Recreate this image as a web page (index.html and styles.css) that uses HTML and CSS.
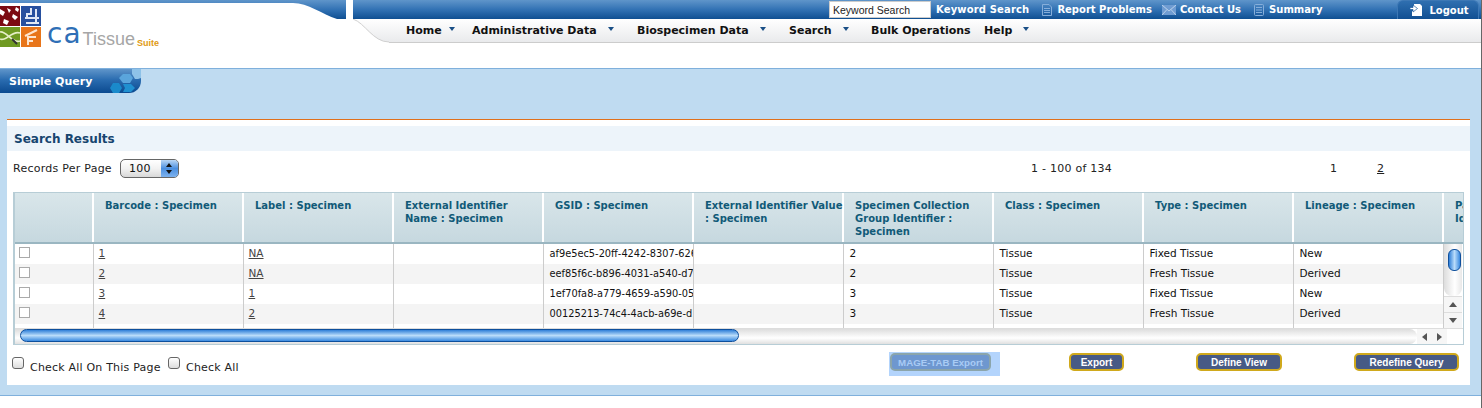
FILE: index.html
```html
<!DOCTYPE html>
<html lang="en">
<head>
  <meta charset="UTF-8">
  <title>caTissue Suite - Simple Query</title>
  <link rel="stylesheet" href="styles.css">
</head>
<body>

<div class="header">
  <div class="brand">
    <svg class="brand-curve" width="346" height="19" viewBox="0 0 346 19">
      <defs>
        <linearGradient id="barBlue" x1="0" y1="0" x2="0" y2="1">
          <stop offset="0" stop-color="#5f95ca"/>
          <stop offset="0.5" stop-color="#3272b4"/>
          <stop offset="1" stop-color="#0f4f92"/>
        </linearGradient>
      </defs>
      <path d="M0 0H346V19H337C322 14 308 3 293 3H0Z" fill="url(#barBlue)"/>
    </svg>
    <div class="logo">
      <svg class="logo-tiles" width="41" height="41" viewBox="0 0 41 41">
        <rect width="20" height="20" fill="#7c0a12"/>
        <path d="M0 3L5 6L3 10L0 8ZM7 2L11 4L9 7ZM13 8L18 11L15 14L12 11ZM4 13L9 15L7 19L3 17ZM16 1L19 3L18 6L15 4Z" fill="#fff"/>
        <rect x="21" width="20" height="20" fill="#27509f"/>
        <path d="M31 2V8H27V13M36 3V18M25 12H39M26 17H39" stroke="#dfe7f5" stroke-width="2" fill="none"/>
        <rect y="21" width="20" height="20" fill="#6f9a22"/>
        <path d="M0 26C6 24 12 38 20 35M0 33C6 36 12 24 20 27" stroke="#e6efc8" stroke-width="1.600" fill="none"/>
        <path d="M12 33L17 38" stroke="#333" stroke-width="2"/>
        <rect x="21" y="21" width="20" height="20" fill="#e8751a"/>
        <path d="M28 39V31H36M25 30L37 24M33 35H28" stroke="#fde5cf" stroke-width="2" fill="none"/>
      </svg>
      <span class="logo-ca">ca</span>
      <span class="logo-tissue">Tissue</span>
      <span class="logo-suite">Suite</span>
    </div>
  </div>

  <div class="topnav">
    <div class="topbar">
      <input class="keyword-input" type="text" value="Keyword Search">
      <a class="toplink keyword-link">Keyword Search</a>
      <a class="toplink report-link">
        <svg class="topicon" width="10" height="12" viewBox="0 0 10 12"><path d="M.5.5H7L9.500 3V11.500H.5ZM2 4.500H8M2 6.500H8M2 8.500H8" fill="none" stroke="#86aeda"/></svg>
        Report Problems
      </a>
      <a class="toplink contact-link">
        <svg class="topicon" width="14" height="10" viewBox="0 0 14 10"><path d="M0 0H14V10H0Z" fill="#6f9cd2"/><path d="M0 0L7 6L14 0M0 10L5 4.500M14 10L9 4.500" fill="none" stroke="#b9d0ea"/></svg>
        Contact Us
      </a>
      <a class="toplink summary-link">
        <svg class="topicon" width="10" height="12" viewBox="0 0 10 12"><path d="M.5 1.500Q.5.500 1.500.500H8.500Q9.500.500 9.500 1.500V10.500Q9.500 11.500 8.500 11.500H1.500Q.5 11.500 .5 10.500ZM2 3.500H8M2 6H8M2 8.500H8" fill="none" stroke="#86aeda"/></svg>
        Summary
      </a>
      <a class="logout">
        <svg width="13" height="13" viewBox="0 0 13 13"><path d="M4 0H10L12 2V12H2V7H4Z" fill="#fff"/><path d="M0 3.500H3V1L7.500 4.500L3 8V5.500H0Z" fill="#fff" stroke="#1d5a9c" stroke-width=".7"/></svg>
        Logout
      </a>
    </div>
    <div class="menubar">
      <svg class="menubar-cut" width="36" height="24" viewBox="0 0 36 24">
        <path d="M0 0C12 4 20 23 36 23V24H0Z" fill="#fff"/>
        <path d="M0 0C12 4 20 23 36 23" fill="none" stroke="#d0d0d0"/>
      </svg>
      <div class="menu-item item-home">Home<span class="caret caret-near"></span></div>
      <div class="menu-item item-admin">Administrative Data<span class="caret"></span></div>
      <div class="menu-item item-bio">Biospecimen Data<span class="caret"></span></div>
      <div class="menu-item item-search">Search<span class="caret"></span></div>
      <div class="menu-item item-bulk">Bulk Operations</div>
      <div class="menu-item item-help">Help<span class="caret"></span></div>
    </div>
  </div>
</div>

<div class="band">
  <div class="query-tab">
    Simple Query
    <svg class="query-hex" width="36" height="24" viewBox="0 0 36 24">
      <path d="M27 0H36V9L33 10H30L27 5Z" fill="#8ec2e8"/>
      <path d="M14 9L18 5H25L28 9L25 14H18Z" fill="#5aa5dc"/>
      <path d="M5 19L8 14H14L17 19L14 24H8Z" fill="#1a8acb"/>
      <path d="M18 15H26L30 19L26 23H18L20 19Z" fill="#2090d0"/>
    </svg>
  </div>

  <div class="panel">
    <h2 class="panel-title">Search Results</h2>

    <div class="records-row">
      <span class="records-label">Records Per Page</span>
      <div class="fake-select">
        <span class="fake-select-value">100</span>
        <span class="fake-select-arrows"></span>
      </div>
      <span class="records-count">1 - 100 of 134</span>
      <span class="page-num">1</span>
      <a class="page-num page-link">2</a>
    </div>

    <div class="grid">
      <table class="grid-head">
        <colgroup>
          <col class="col-check"><col class="col-std"><col class="col-std"><col class="col-std"><col class="col-std">
          <col class="col-std"><col class="col-std"><col class="col-std"><col class="col-std"><col class="col-std"><col class="col-last">
        </colgroup>
        <tr>
          <th></th>
          <th>Barcode : Specimen</th>
          <th>Label : Specimen</th>
          <th>External Identifier<br>Name : Specimen</th>
          <th>GSID : Specimen</th>
          <th class="th-nowrap">External Identifier Value<br>: Specimen</th>
          <th>Specimen Collection Group Identifier : Specimen</th>
          <th>Class : Specimen</th>
          <th>Type : Specimen</th>
          <th>Lineage : Specimen</th>
          <th>Parent Identifier</th>
        </tr>
      </table>

      <div class="grid-middle">
        <table class="grid-body">
          <colgroup>
            <col class="col-check"><col class="col-std"><col class="col-std"><col class="col-std"><col class="col-std">
            <col class="col-std"><col class="col-std"><col class="col-std"><col class="col-std"><col class="col-std">
          </colgroup>
          <tr>
            <td><span class="row-check"></span></td><td><a>1</a></td><td><a>NA</a></td><td></td>
            <td class="cell-gsid">af9e5ec5-20ff-4242-8307-626</td><td></td><td>2</td><td>Tissue</td><td>Fixed Tissue</td><td>New</td>
          </tr>
          <tr>
            <td><span class="row-check"></span></td><td><a>2</a></td><td><a>NA</a></td><td></td>
            <td class="cell-gsid">eef85f6c-b896-4031-a540-d78</td><td></td><td>2</td><td>Tissue</td><td>Fresh Tissue</td><td>Derived</td>
          </tr>
          <tr>
            <td><span class="row-check"></span></td><td><a>3</a></td><td><a>1</a></td><td></td>
            <td class="cell-gsid">1ef70fa8-a779-4659-a590-05</td><td></td><td>3</td><td>Tissue</td><td>Fixed Tissue</td><td>New</td>
          </tr>
          <tr>
            <td><span class="row-check"></span></td><td><a>4</a></td><td><a>2</a></td><td></td>
            <td class="cell-gsid">00125213-74c4-4acb-a69e-d1</td><td></td><td>3</td><td>Tissue</td><td>Fresh Tissue</td><td>Derived</td>
          </tr>
          <tr class="row-filler"><td></td><td></td><td></td><td></td><td></td><td></td><td></td><td></td><td></td><td></td></tr>
        </table>
        <div class="vscroll">
          <div class="vscroll-track"><div class="vscroll-thumb"></div></div>
          <div class="scroll-btn"><span class="tri tri-up"></span></div>
          <div class="scroll-btn"><span class="tri tri-down"></span></div>
        </div>
      </div>

      <div class="hscroll">
        <div class="hscroll-track"><div class="hscroll-thumb"></div></div>
        <div class="scroll-btn-h"><span class="tri tri-left"></span></div>
        <div class="scroll-btn-h"><span class="tri tri-right"></span></div>
        <div class="scroll-corner"></div>
      </div>
    </div>

    <div class="actions">
      <label class="check-label check-page"><span class="mac-check"></span>Check All On This Page</label>
      <label class="check-label check-all"><span class="mac-check"></span>Check All</label>
      <div class="disabled-wrap"><button class="btn btn-disabled">MAGE-TAB Export</button></div>
      <button class="btn btn-export">Export</button>
      <button class="btn btn-define">Define View</button>
      <button class="btn btn-redefine">Redefine Query</button>
    </div>
  </div>
</div>

</body>
</html>
```

FILE: styles.css
```css
html, body {
  margin: 0;
  padding: 0;
  height: 408px;
  overflow: hidden;
  background-color: #fff;
}
body {
  box-sizing: border-box;
  border-right: 1px solid #666;
  font-family: "DejaVu Sans", Verdana, sans-serif;
  font-size: 11px;
  color: #222;
}

/* header */
.header {
  display: flex;
  height: 68px;
}
.brand {
  position: relative;
  flex: none;
  width: 346px;
  margin-right: 7px;
}
.brand-curve {
  position: absolute;
  left: 0;
  top: 0;
}
.logo {
  position: relative;
  display: flex;
  align-items: flex-end;
  padding-top: 6px;
  height: 41px;
}
.logo-tiles {
  flex: none;
}
.logo-ca {
  font-family: "DejaVu Sans", sans-serif;
  font-size: 28px;
  line-height: 28px;
  letter-spacing: 1px;
  color: #2f6fb6;
  margin-left: 6px;
  margin-bottom: -1px;
}
.logo-tissue {
  font-family: "Liberation Sans", Arial, sans-serif;
  font-size: 18px;
  line-height: 18px;
  color: #a6a6a6;
  margin-left: 1px;
  margin-bottom: -1px;
}
.logo-suite {
  font-family: "Liberation Sans", Arial, sans-serif;
  font-weight: bold;
  font-size: 9px;
  line-height: 10px;
  color: #e09a12;
  margin-left: 2px;
  margin-bottom: -1px;
}

.topnav {
  flex: 1;
  min-width: 0;
}
.topbar {
  display: flex;
  align-items: center;
  height: 19px;
  padding-left: 476px;
  background: linear-gradient(#5f95ca, #3272b4 50%, #0f4f92);
}
.keyword-input {
  box-sizing: border-box;
  width: 102px;
  height: 17px;
  margin: 0 5px 0 0;
  padding: 0 3px;
  border: 1px solid #ccc;
  background-color: #fff;
  font-family: "Liberation Sans", Arial, sans-serif;
  font-size: 10.500px;
  color: #222;
}
.toplink {
  display: flex;
  align-items: center;
  gap: 5px;
  font-weight: bold;
  font-size: 10px;
  color: #fff;
  white-space: nowrap;
}
.keyword-link { letter-spacing: .15px; }
.report-link { margin-left: 13px; }
.contact-link { margin-left: 10px; gap: 4px; }
.summary-link { margin-left: 13px; }
.logout {
  display: flex;
  align-items: center;
  gap: 6px;
  flex: none;
  box-sizing: border-box;
  width: 82px;
  height: 19px;
  margin-left: 75px;
  padding-left: 12px;
  border: 1px solid #3d78b5;
  border-bottom: 0;
  border-radius: 6px 6px 0 0;
  background: linear-gradient(#2f6fb0, #114f92);
  font-size: 10px;
  font-weight: bold;
  color: #fff;
}

.menubar {
  position: relative;
  display: flex;
  align-items: center;
  box-sizing: border-box;
  height: 24px;
  padding: 0 0 0 53px;
  border-bottom: 1px solid #ccc;
  background: linear-gradient(#fff, #e9eaec);
}
.menubar-cut {
  position: absolute;
  left: 0;
  top: 0;
}
.menu-item {
  font-weight: bold;
  color: #111;
  white-space: nowrap;
}
.item-home { width: 66px; }
.item-admin { width: 165px; }
.item-bio { width: 152px; }
.item-search { width: 82px; }
.item-bulk { width: 113px; }
.caret {
  display: inline-block;
  margin: 0 0 3px 11px;
  border-left: 3px solid transparent;
  border-right: 3px solid transparent;
  border-top: 4px solid #1a4f86;
}
.caret-near {
  margin-left: 7px;
}

/* blue band */
.band {
  box-sizing: border-box;
  height: 328px;
  border-top: 1px solid #7fb0dc;
  border-bottom: 1px solid #7fb0dc;
  background-color: #bfdbf1;
}
.query-tab {
  position: relative;
  box-sizing: border-box;
  width: 141px;
  height: 24px;
  padding: 6px 0 0 9px;
  border-bottom-right-radius: 12px;
  background: linear-gradient(#5f95ca, #2a6cb0 45%, #0b4a90);
  overflow: hidden;
  font-weight: bold;
  color: #fff;
}
.query-hex {
  position: absolute;
  right: 0;
  top: 0;
}

.panel {
  height: 265px;
  margin: 26px 11px 0 7px;
  border-top: 1px solid #e0701c;
  background-color: #fff;
}
.panel-title {
  margin: 6px 0 0;
  padding: 1px 7px 0;
  height: 24px;
  line-height: 25px;
  background-color: #edf4fa;
  font-size: 12px;
  font-weight: bold;
  color: #17456f;
}
.records-row {
  display: flex;
  align-items: center;
  height: 19px;
  margin: 8px 0 14px 6px;
  letter-spacing: .25px;
}
.records-label {
  width: 107px;
  color: #222;
}
.fake-select {
  display: flex;
  box-sizing: border-box;
  width: 59px;
  height: 19px;
  border: 1px solid #666;
  border-radius: 5px;
  background: linear-gradient(#fff, #f2f2f2 50%, #d8d8d8);
  overflow: hidden;
}
.fake-select-value {
  flex: 1;
  padding-left: 8px;
  line-height: 17px;
  color: #111;
}
.fake-select-arrows {
  position: relative;
  width: 17px;
  background: linear-gradient(#b9d6f5, #4b8fe0 50%, #7db2ee);
}
.fake-select-arrows::before,
.fake-select-arrows::after {
  content: "";
  position: absolute;
  left: 5px;
  border-left: 3px solid transparent;
  border-right: 3px solid transparent;
}
.fake-select-arrows::before {
  top: 3px;
  border-bottom: 4px solid #111;
}
.fake-select-arrows::after {
  bottom: 3px;
  border-top: 4px solid #111;
}
.records-count {
  margin-left: 852px;
  width: 299px;
}
.page-num {
  width: 47px;
}
.page-link {
  text-decoration: underline;
}

/* results grid */
.grid {
  box-sizing: border-box;
  width: 1451px;
  margin-left: 6px;
  border: 1px solid #b7cdd6;
  border-left-width: 2px;
  overflow: hidden;
}
.grid table {
  border-collapse: collapse;
  table-layout: fixed;
}
.grid-head {
  width: 1478px;
}
.col-check { width: 78px; }
.col-std { width: 150px; }
.col-last { width: 50px; }
.grid-head th {
  box-sizing: border-box;
  height: 50px;
  padding: 6px 2px 0 11px;
  border-left: 2px solid #fff;
  border-bottom: 2px solid #9ab6c1;
  background: linear-gradient(#d9e6ea, #c6d8df);
  vertical-align: top;
  text-align: left;
  font-size: 10px;
  font-weight: bold;
  line-height: 13px;
  color: #115a78;
}
.grid-head th:first-child {
  border-left: 0;
}
.grid-head .th-nowrap {
  padding-right: 0;
  white-space: nowrap;
}
.grid-middle {
  display: flex;
  height: 84px;
}
.grid-body {
  flex: none;
  width: 1428px;
}
.grid-body td {
  box-sizing: border-box;
  height: 20px;
  padding: 0 5px 2px 6px;
  border-left: 1px solid #ccc;
  overflow: hidden;
  white-space: nowrap;
  font-size: 10.500px;
  color: #111;
}
.grid-body td:first-child {
  border-left: 0;
  padding-left: 4px;
}
.grid-body .cell-gsid {
  padding-right: 0;
  font-size: 9.800px;
}
.grid-body tr:nth-child(even) td {
  background-color: #f4f4f4;
}
.grid-body .row-filler td {
  height: 4px;
  padding: 0;
  background-color: #fff;
}
.grid-body a {
  margin-left: -1px;
  color: #444;
  text-decoration: underline;
}
.row-check {
  display: block;
  box-sizing: border-box;
  width: 11px;
  height: 11px;
  margin: 0 0 2px 0;
  border: 1px solid #aaa;
  background-color: #fff;
}
.vscroll {
  display: flex;
  flex-direction: column;
  flex: none;
  width: 19px;
  border-left: 1px solid #ccc;
  box-sizing: border-box;
  background-color: #fff;
}
.vscroll-track {
  flex: 1;
  padding-top: 5px;
  border-radius: 0 0 8px 8px;
  background: linear-gradient(90deg, #ddd, #fff 60%, #e8e8e8);
}
.vscroll-thumb {
  box-sizing: border-box;
  width: 13px;
  height: 22px;
  margin-left: 4px;
  border: 1px solid #0e4f9c;
  border-radius: 6px;
  background: linear-gradient(90deg, #2f7fd8, #b9dcfa 50%, #3a8ae0);
}
.scroll-btn {
  display: flex;
  align-items: center;
  justify-content: center;
  height: 16px;
  border-top: 1px solid #ddd;
  box-sizing: border-box;
  background-color: #f6f6f6;
}
.hscroll {
  display: flex;
  height: 16px;
  background-color: #fff;
  border-top: 1px solid #ddd;
  box-sizing: border-box;
}
.hscroll-track {
  flex: 1;
  padding: 0 0 0 5px;
  border-radius: 0 8px 8px 0;
  background: linear-gradient(#ddd, #fff 60%, #e0e0e0);
}
.hscroll-thumb {
  box-sizing: border-box;
  width: 719px;
  height: 13px;
  border: 1px solid #0e4f9c;
  border-radius: 7px;
  background: linear-gradient(#2f7fd8, #b9dcfa 50%, #3a8ae0);
}
.scroll-btn-h {
  display: flex;
  align-items: center;
  justify-content: center;
  width: 15px;
  background-color: #f6f6f6;
}
.scroll-corner {
  width: 16px;
  background-color: #fff;
}
.tri {
  display: block;
  width: 0;
  height: 0;
}
.tri-up {
  border-left: 4px solid transparent;
  border-right: 4px solid transparent;
  border-bottom: 5px solid #555;
}
.tri-down {
  border-left: 4px solid transparent;
  border-right: 4px solid transparent;
  border-top: 5px solid #555;
}
.tri-left {
  border-top: 4px solid transparent;
  border-bottom: 4px solid transparent;
  border-right: 5px solid #555;
}
.tri-right {
  border-top: 4px solid transparent;
  border-bottom: 4px solid transparent;
  border-left: 5px solid #555;
}

/* bottom actions */
.actions {
  display: flex;
  align-items: flex-start;
  height: 24px;
  margin: 7px 0 0 5px;
}
.check-label {
  display: flex;
  align-items: center;
  white-space: nowrap;
  color: #222;
  padding-top: 9px;
  letter-spacing: .2px;
}
.check-page { width: 156px; }
.check-all { width: 72px; }
.mac-check {
  flex: none;
  box-sizing: border-box;
  width: 12px;
  height: 12px;
  margin: -9px 6px 0 0;
  border: 1px solid #666;
  border-radius: 3px;
  background: linear-gradient(#fff, #ddd);
}
.disabled-wrap {
  box-sizing: border-box;
  width: 111px;
  height: 24px;
  margin-left: 649px;
  padding: 1px 0 0 1px;
  background-color: #b3d4fc;
}
.btn {
  box-sizing: border-box;
  height: 18px;
  margin-top: 1px;
  padding: 0;
  border: 2px solid #d0a91c;
  border-radius: 5px;
  background-color: #475a85;
  font-family: "Liberation Sans", Arial, sans-serif;
  font-size: 10px;
  font-weight: bold;
  white-space: nowrap;
  color: #fff;
}
.btn-disabled {
  width: 101px;
  margin-top: 0;
  border-color: #8ba5ab;
  background-color: #6e97cf;
  font-size: 9.700px;
  color: #a9cbf5;
}
.btn-export {
  width: 55px;
  margin-left: 69px;
}
.btn-define {
  width: 86px;
  margin-left: 72px;
}
.btn-redefine {
  width: 105px;
  margin-left: 72px;
}
```
